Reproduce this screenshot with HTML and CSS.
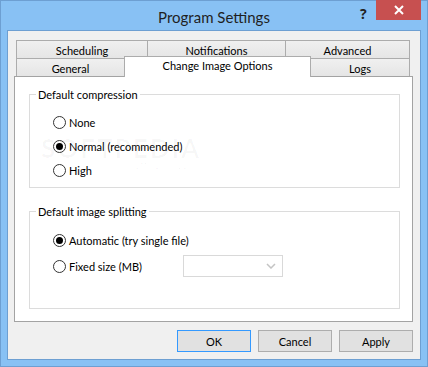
FILE: index.html
```html
<!DOCTYPE html>
<html lang="en">
<head>
  <meta charset="UTF-8"><title>Program Settings</title>
  <link rel="stylesheet" href="styles.css">
</head>
<body>

<div class="window">
  <div class="titlebar">
    <span class="title">Program Settings</span>
    <span class="help">?</span>
    <button class="close-btn">
      <svg width="10" height="10" viewBox="0 0 10 10"><path d="M1 1L9 9M9 1L1 9" stroke="#fff" stroke-width="2"/></svg>
    </button>
  </div>

  <div class="client">
    <div class="tabs">
      <div class="tab-row top-row">
        <div class="tab w-sched">Scheduling</div>
        <div class="tab w-notif">Notifications</div>
        <div class="tab w-adv">Advanced</div>
      </div>
      <div class="tab-row bottom-row">
        <div class="tab w-gen">General</div>
        <div class="tab active w-change">Change Image Options</div>
        <div class="tab w-logs">Logs</div>
      </div>
    </div>

    <div class="panel">
      <fieldset class="group group-compress">
        <legend>Default compression</legend>
        <label class="radio"><span class="dot"></span>None</label>
        <label class="radio checked"><span class="dot"></span>Normal (recommended)</label>
        <label class="radio"><span class="dot"></span>High</label>
      </fieldset>

      <fieldset class="group group-split">
        <legend>Default image splitting</legend>
        <label class="radio checked"><span class="dot"></span>Automatic (try single file)</label>
        <div class="split-row">
          <label class="radio fixed"><span class="dot"></span>Fixed size (MB)</label>
          <div class="combo">
            <svg width="10" height="6" viewBox="0 0 10 6"><path d="M1 1L5 5L9 1" fill="none" stroke="#c4c4c4" stroke-width="1.5"/></svg>
          </div>
        </div>
      </fieldset>

      <div class="watermark">SOFTPEDIA<span>www.softpedia.com</span></div>
    </div>

    <div class="buttons">
      <button class="btn default">OK</button>
      <button class="btn">Cancel</button>
      <button class="btn">Apply</button>
    </div>
  </div>
</div>

</body>
</html>
```

FILE: styles.css
```css
* { margin:0; padding:0; box-sizing:border-box; }
body { font-family:'Lato','Open Sans',sans-serif; font-size:11px; color:#000; background:#fff; }

/* Window frame */
.window { width:428px; height:367px; background:#88c1f4; border:1px solid #6d9fd2;
  padding:0 6px 6px 6px; display:flex; flex-direction:column; position:relative;
}
.titlebar { height:29px; display:flex; align-items:center; justify-content:center; }
.title { font-size:15px; color:#1f1f1f; margin-top:2px; }
.help { position:absolute; top:3px; left:359px; font-family:'Open Sans',sans-serif; font-size:14px; font-weight:bold; color:#222; }
.close-btn { position:absolute; top:-1px; left:375px; width:45px; height:20px; background:#c75050;
  border:none; display:flex; align-items:center; justify-content:center;
}

.client { flex:1; background:#f0f0f0; border:1px solid #6d9fd2; padding:9px 7px 0 6px;
  display:flex; flex-direction:column;
}

/* Tabs */
.tabs { padding:0 0 0 2px; }
.tab-row { display:flex; }
.tab { height:18px; border:1px solid #acacac; margin-left:-1px; background:linear-gradient(#f0f0f0,#e5e5e5);
  display:flex; align-items:center; justify-content:center; color:#000;
}
.tab:first-child { margin-left:0; }
.top-row .tab { border-bottom:none; padding-top:2px; }
.bottom-row .tab { border-bottom:none; padding-top:1px; }
.w-sched { width:132px; }
.w-notif { width:139px; }
.w-adv { width:125px; }
.w-gen { width:109px; }
.w-change { width:187px; }
.w-logs { width:100px; }
.tab.active { background:#fff; height:21px; margin-top:-2px; margin-bottom:-1px; position:relative; z-index:1;
  align-items:flex-start; padding-top:2px;
}

.panel { height:246px; background:#fff; border:1px solid #a3a3a3; padding:11px 12px 0 14px; position:relative; }

/* Group boxes */
.group { border:1px solid #dcdcdc; padding:0; display:flex; flex-direction:column; }
.group legend { margin-left:6px; padding:0 2px; color:#000; }
.group .radio { margin-left:23px; }
.group-compress { height:100px; gap:7px; padding-top:13px; }
.group-split { height:104px; margin-top:17px; gap:7px; padding-top:14px; }

.radio { display:flex; align-items:center; height:17px; gap:3px; }
.dot { width:13px; height:13px; border:1px solid #333; border-radius:50%; background:#fff;
  display:flex; align-items:center; justify-content:center;
}
.checked .dot::after { content:''; width:7px; height:7px; border-radius:50%; background:#000; }

.split-row { display:flex; align-items:center; }
.radio.fixed { width:130px; }
.split-row .combo { margin-top:-1px; }
.combo { width:100px; height:22px; border:1px solid #d9d9d9; background:#fff;
  display:flex; align-items:center; justify-content:flex-end; padding-right:6px;
}

.watermark { position:absolute; left:26px; top:55px; font-size:26px; font-weight:bold; letter-spacing:2px;
  color:rgba(0,0,0,0.03); pointer-events:none;
}
.watermark span { position:absolute; left:60px; top:26px; font-size:11px; font-weight:normal; letter-spacing:0; white-space:nowrap; }

/* Buttons */
.buttons { display:flex; justify-content:flex-end; gap:7px; margin-top:8px; }
.btn { width:74px; height:22px; font-family:inherit; font-size:11px; background:#e1e1e1; border:1px solid #adadad; color:#000; }
.btn.default { border-color:#3399ff; }
```
